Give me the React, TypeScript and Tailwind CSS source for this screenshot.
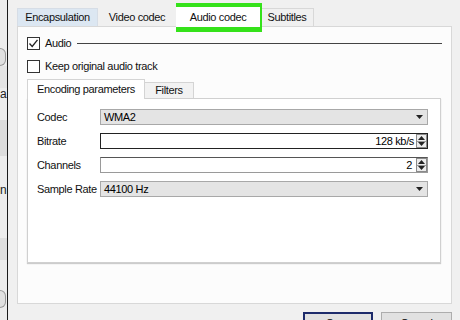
import React from "react";

const font = { fontFamily: '"Liberation Sans", Arial, sans-serif', letterSpacing: "-0.35px" };

function Check({ checked }: { checked?: boolean }) {
  return (
    <div className="w-[13px] h-[13px] shrink-0 border border-[#333] bg-white flex items-center justify-center">
      {checked && (
        <svg width="11" height="11" viewBox="0 0 11 11">
          <path d="M1.5 5.5 L4.2 8.5 L9.5 1.8" fill="none" stroke="#222" strokeWidth="1.3" />
        </svg>
      )}
    </div>
  );
}

function Arrow() {
  return (
    <svg width="7" height="4" viewBox="0 0 7 4">
      <path d="M0 0 H7 L3.5 4 Z" fill="#222" />
    </svg>
  );
}

function Spinner() {
  return (
    <div className="w-[11px] h-[14px] shrink-0 flex flex-col border border-[#8a8a8a] bg-[#ececec]">
      <div className="flex-1 flex items-center justify-center border-b border-[#9a9a9a]">
        <svg width="7" height="4" viewBox="0 0 7 4">
          <path d="M0 4 H7 L3.5 0 Z" fill="#222" />
        </svg>
      </div>
      <div className="flex-1 flex items-center justify-center">
        <Arrow />
      </div>
    </div>
  );
}

function Row({ label, children }: { label: string; children: React.ReactNode }) {
  return (
    <div className="flex items-center h-[16px] shrink-0">
      <div className="w-[63px] shrink-0 whitespace-nowrap text-[11px] text-[#111]">{label}</div>
      <div className="w-[328px] h-[16px]">{children}</div>
    </div>
  );
}

export default function App() {
  return (
    <div className="w-[460px] h-[320px] bg-[#f0f0f0] flex overflow-hidden relative" style={font}>
      {/* background window strip */}
      <div className="w-[7px] shrink-0 h-full bg-[#ececec] flex flex-col text-[#222] text-[12px] leading-none overflow-hidden">
        <div className="h-[48px] shrink-0" />
        <div className="h-[18px] w-[6px] shrink-0 rounded-r-full border border-l-0 border-[#9a9a9a] bg-[#e0e0e0]" />
        <div className="h-[22px] shrink-0 bg-[#e4e4e4]" />
        <div className="h-[14px] shrink-0">a</div>
        <div className="h-[18px] shrink-0" />
        <div className="h-[36px] shrink-0 bg-[#dcdcdc]" />
        <div className="h-[28px] shrink-0" />
        <div className="h-[14px] shrink-0">n</div>
        <div className="h-[40px] shrink-0" />
        <div className="h-[22px] shrink-0 bg-[#dedede]" />
        <div className="h-[30px] shrink-0" />
        <div className="h-[18px] w-[6px] shrink-0 rounded-r-full border border-l-0 border-[#9a9a9a] bg-[#e0e0e0]" />
      </div>
      <div className="w-[1px] shrink-0 h-full bg-[#1a1a1a]" />
      <div className="flex-1 flex flex-col pl-[9px] pr-[8px] pt-[8px]">
        {/* tab bar */}
        <div className="flex h-[18px] shrink-0 items-end text-[11px] text-[#111]">
          <div className="w-[81px] h-[18px] bg-[#dce7f2] border border-b-0 border-[#d6dde6] flex items-center justify-center">
            Encapsulation
          </div>
          <div className="w-[78px] h-[18px] flex items-center justify-center">Video codec</div>
          <div className="w-[84px] h-[20px] bg-white -mb-[1px] z-10 flex items-center justify-center">
            Audio codec
          </div>
          <div className="w-[54px] h-[18px] bg-[#f0f0f0] border border-b-0 border-[#d8d8d8] flex items-center justify-center">
            Subtitles
          </div>
        </div>
        {/* main panel */}
        <div className="h-[278px] shrink-0 bg-[#fcfcfc] border border-[#d8d8d8] flex flex-col pl-[9px] pr-[9px] pt-[9px]">
          <div className="flex items-center h-[14px] shrink-0 gap-[5px] text-[11px] text-[#111]">
            <Check checked />
            <span>Audio</span>
            <div className="flex-1 h-[1px] bg-[#444] ml-[1px]" />
          </div>
          <div className="flex items-center h-[14px] shrink-0 gap-[5px] mt-[9px] text-[11px] text-[#111]">
            <Check />
            <span>Keep original audio track</span>
          </div>
          {/* inner tabs */}
          <div className="flex items-end h-[19px] shrink-0 mt-[6px] text-[11px] text-[#111]">
            <div className="w-[118px] h-[20px] bg-white border border-b-0 border-[#d4d4d4] -mb-[1px] z-10 flex items-center justify-center">
              Encoding parameters
            </div>
            <div className="w-[49px] h-[16px] bg-[#f2f2f2] border border-b-0 border-l-0 border-[#d4d4d4] flex items-center justify-center">
              Filters
            </div>
          </div>
          <div className="w-[414px] h-[165px] shrink-0 bg-white border border-[#d0d0d0] shadow-[0_1px_1px_#ccc] flex flex-col gap-[8px] pl-[9px] pt-[10px]">
            <Row label="Codec">
              <div className="w-full h-full bg-[#e4e4e4] border border-[#a8a8a8] flex items-center pl-[3px] pr-[4px] text-[11px]">
                <span className="flex-1">WMA2</span>
                <Arrow />
              </div>
            </Row>
            <Row label="Bitrate">
              <div className="w-full h-full bg-white border border-[#222] flex items-center justify-end text-[11px] gap-[2px]">
                <span>128 kb/s</span>
                <Spinner />
              </div>
            </Row>
            <Row label="Channels">
              <div className="w-full h-full bg-white border border-[#9a9a9a] border-t-[#555] flex items-center justify-end text-[11px] gap-[4px]">
                <span>2</span>
                <Spinner />
              </div>
            </Row>
            <Row label="Sample Rate">
              <div className="w-full h-full bg-[#e4e4e4] border border-[#a8a8a8] flex items-center pl-[3px] pr-[4px] text-[11px]">
                <span className="flex-1">44100 Hz</span>
                <Arrow />
              </div>
            </Row>
          </div>
        </div>
        {/* buttons */}
        <div className="flex shrink-0 justify-end gap-[8px] mt-[8px] text-[11px] leading-[12px]">
          <div className="w-[70px] h-[22px] shrink-0 bg-[#e1e1e1] border-2 border-[#1d2b6b] flex justify-center pt-[3px]">
            Save
          </div>
          <div className="w-[71px] h-[22px] shrink-0 bg-[#e1e1e1] border border-[#adadad] flex justify-center pt-[4px]">
            Cancel
          </div>
        </div>
      </div>
      {/* annotation highlight */}
      <div className="absolute left-[176px] top-[3px] w-[86px] h-[29px] border-[5px] border-[#35e21a]" />
    </div>
  );
}
